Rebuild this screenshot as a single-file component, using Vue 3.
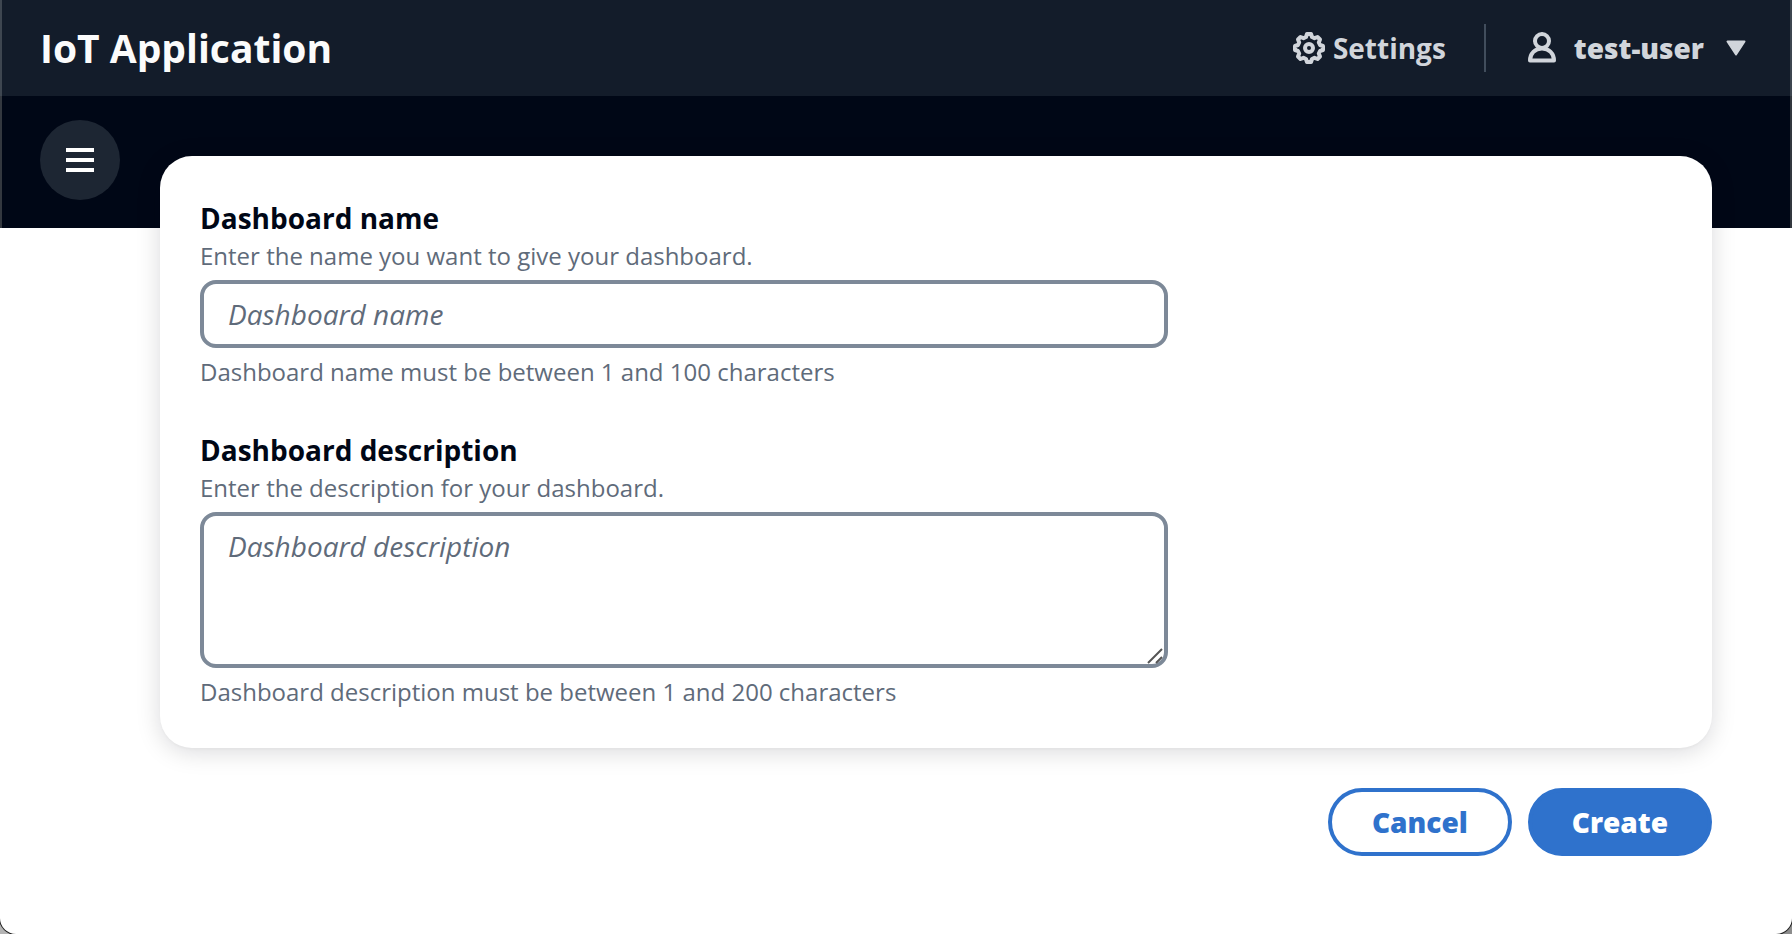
<script setup>
import { ref } from 'vue'

const name = ref('')
const description = ref('')
</script>

<template>
  <div class="window">
    <header class="topbar">
      <h1 class="title">IoT Application</h1>
      <nav class="utilities" aria-label="Utilities">
        <button class="utility settings" type="button">
          <svg class="gear" viewBox="0 0 32 32" aria-hidden="true">
            <path d="M14 2h4l1 3 2.500 1.200L24.500 5 27 7.500l-1.200 3L27 13l3 1v4l-3 1-1.200 2.500 1.200 3-2.500 2.500-3-1.200L19 27l-1 3h-4l-1-3-2.500-1.200-3 1.200L5 24.500l1.200-3L5 19l-3-1v-4l3-1 1.200-2.500L5 7.500 7.500 5l3 1.200L13 5Z" />
            <circle cx="16" cy="16" r="4" />
          </svg>
          <span>Settings</span>
        </button>
        <span class="divider"></span>
        <button class="utility user" type="button">
          <svg class="person" viewBox="0 0 28 32" aria-hidden="true">
            <circle cx="14" cy="9" r="7" />
            <path d="M2 28.500c0-7 5-12 12-12s12 5 12 12Z" />
          </svg>
          <span>test-user</span>
          <svg class="caret" viewBox="0 0 20 16" aria-hidden="true">
            <path d="M1.500 1.500h17L10 14.500Z" />
          </svg>
        </button>
      </nav>
    </header>

    <div class="body">
      <div class="band"></div>
      <aside class="rail">
        <button class="menu" type="button" aria-label="Open navigation">
          <svg viewBox="0 0 28 24" aria-hidden="true">
            <path d="M0 2h28M0 12h28M0 22h28" />
          </svg>
        </button>
      </aside>
      <main class="content">
        <form class="form" @submit.prevent>
          <section class="card">
            <div class="field">
              <label for="dashboard-name">Dashboard name</label>
              <p id="name-about" class="note about">Enter the name you want to give your dashboard.</p>
              <div class="columns">
                <input id="dashboard-name" v-model="name" type="text" placeholder="Dashboard name" aria-describedby="name-about name-rule" />
              </div>
              <p id="name-rule" class="note">Dashboard name must be between 1 and 100 characters</p>
            </div>
            <div class="field">
              <label for="dashboard-description">Dashboard description</label>
              <p id="description-about" class="note about">Enter the description for your dashboard.</p>
              <div class="columns">
                <div class="area">
                  <textarea id="dashboard-description" v-model="description" rows="3" placeholder="Dashboard description" aria-describedby="description-about description-rule"></textarea>
                  <svg class="grip" viewBox="0 0 16 16" aria-hidden="true">
                    <path d="M1 15 15 1M9 15l6-6" />
                  </svg>
                </div>
              </div>
              <p id="description-rule" class="note">Dashboard description must be between 1 and 200 characters</p>
            </div>
          </section>
          <div class="actions">
            <button class="button" type="button">Cancel</button>
            <button class="button primary" type="submit">Create</button>
          </div>
        </form>
      </main>
    </div>
  </div>
</template>

<style>
body {
  background: linear-gradient(90deg, #b4b4b4 50%, #8c8c8c 50%);
}
</style>

<style scoped>
* {
  box-sizing: border-box;
}

.window {
  min-height: 100vh;
  overflow: hidden;
  background: #fff;
  border-radius: 0 0 16px 16px;
  box-shadow: 0 0 0 1px #222;
  color: #000716;
  font-family: "Open Sans", "Noto Sans", sans-serif;
  font-size: 28px;
  line-height: 40px;
}

button,
input,
textarea {
  font: inherit;
}

button {
  cursor: pointer;
}

.topbar {
  display: flex;
  align-items: center;
  justify-content: space-between;
  height: 96px;
  padding: 0 44px 0 38px;
  background: #131c2a;
  border: solid #3e4650;
  border-width: 0 2px;
}

.title {
  margin: 0;
  color: #fbfbfb;
  font-size: 39px;
  font-weight: 700;
  line-height: 48px;
}

.utilities {
  display: flex;
  align-items: center;
}

.utility {
  display: flex;
  align-items: center;
  padding: 0;
  border: 0;
  background: none;
  color: #d1d5db;
  font-weight: 800;
}

.settings {
  gap: 8px;
  font-weight: 700;
}

.utility svg {
  flex: none;
  fill: none;
  stroke: currentColor;
  stroke-width: 4;
  stroke-linejoin: round;
}

.utility .gear {
  width: 32px;
  height: 32px;
}

.person {
  width: 28px;
  height: 32px;
  margin-right: 18px;
}

.utility .caret {
  width: 20px;
  height: 16px;
  margin-left: 22px;
  fill: currentColor;
  stroke-width: 2;
}

.divider {
  width: 2px;
  height: 48px;
  margin: 0 42px 0 38px;
  background: #414d5c;
}

.body {
  display: grid;
  grid-template-columns: 160px 1fr;
  grid-template-rows: 132px auto;
}

.band {
  grid-area: 1 / 1 / 2 / 3;
  background: #000716;
  border: solid #33383f;
  border-width: 0 2px;
}

.rail {
  grid-area: 1 / 1 / 3 / 2;
  padding: 24px 40px;
}

.menu {
  display: grid;
  place-items: center;
  width: 80px;
  height: 80px;
  padding: 0;
  border: 0;
  border-radius: 50%;
  background: #1d2633;
}

.menu svg {
  width: 28px;
  height: 24px;
  stroke: #fff;
  stroke-width: 4;
}

.content {
  grid-area: 1 / 2 / 3 / 3;
  padding: 60px 80px 40px 0;
}

.card {
  display: flex;
  flex-direction: column;
  gap: 40px;
  padding: 42px 40px 38px;
  border-radius: 32px;
  background: #fff;
  box-shadow: 0 2px 2px rgba(0, 7, 22, 0.02), 0 4px 24px rgba(0, 7, 22, 0.15);
}

label {
  display: block;
  font-weight: 700;
}

.note {
  margin: 0;
  color: #5f6b7a;
  font-size: 24px;
  line-height: 36px;
}

.about {
  margin-bottom: 6px;
}

.columns {
  display: grid;
  grid-template-columns: 2fr 1fr;
  column-gap: 20px;
  margin-bottom: 6px;
}

input,
textarea {
  display: block;
  width: 100%;
  padding: 10px 24px;
  border: 4px solid #7d8998;
  border-radius: 16px;
  outline: 0;
  background: #fff;
  color: #000716;
}

input {
  height: 68px;
}

textarea {
  height: 156px;
  resize: none;
}

input::placeholder,
textarea::placeholder {
  color: #5f6b7a;
  font-style: italic;
  opacity: 1;
}

.area {
  position: relative;
}

.grip {
  position: absolute;
  right: 5px;
  bottom: 4px;
  width: 16px;
  height: 16px;
  fill: none;
  stroke: #555;
  stroke-width: 2;
  pointer-events: none;
}

.actions {
  display: flex;
  justify-content: flex-end;
  gap: 16px;
  margin-top: 40px;
}

.button {
  padding: 10px 40px;
  border: 4px solid #2f72cc;
  border-radius: 40px;
  background: #fff;
  color: #2f72cc;
  font-weight: 800;
}

.primary {
  background: #2f72cc;
  color: #fff;
}
</style>
